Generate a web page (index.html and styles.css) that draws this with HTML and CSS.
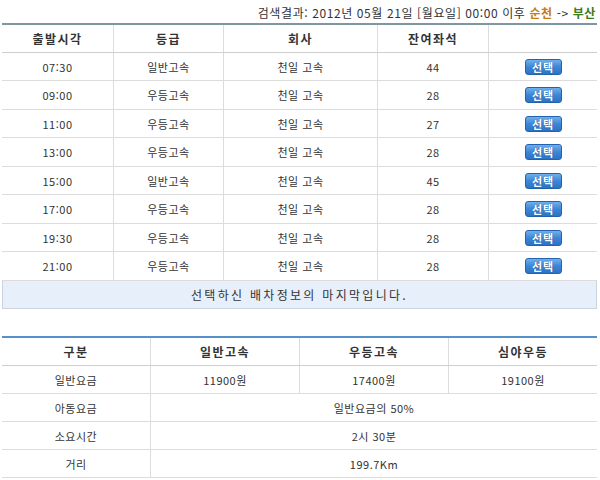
FILE: index.html
```html
<!DOCTYPE html>
<html lang="ko">
<head>
<meta charset="utf-8">
<link rel="stylesheet" href="styles.css">
</head>
<body>
<div class="page">
  <div class="title">검색결과: 2012년 05월 21일 [월요일] 00:00 이후 <span class="from">순천</span> -&gt; <span class="to">부산</span></div>

  <div class="sched">
    <div class="row head">
      <div class="c">출발시각</div><div class="c">등급</div><div class="c">회사</div><div class="c">잔여좌석</div><div class="c"></div>
    </div>
    <div class="row a"><div class="c">07:30</div><div class="c">일반고속</div><div class="c">천일 고속</div><div class="c">44</div><div class="c"><span class="btn">선택</span></div></div>
    <div class="row b"><div class="c">09:00</div><div class="c">우등고속</div><div class="c">천일 고속</div><div class="c">28</div><div class="c"><span class="btn">선택</span></div></div>
    <div class="row a"><div class="c">11:00</div><div class="c">우등고속</div><div class="c">천일 고속</div><div class="c">27</div><div class="c"><span class="btn">선택</span></div></div>
    <div class="row b"><div class="c">13:00</div><div class="c">우등고속</div><div class="c">천일 고속</div><div class="c">28</div><div class="c"><span class="btn">선택</span></div></div>
    <div class="row a"><div class="c">15:00</div><div class="c">일반고속</div><div class="c">천일 고속</div><div class="c">45</div><div class="c"><span class="btn">선택</span></div></div>
    <div class="row b"><div class="c">17:00</div><div class="c">우등고속</div><div class="c">천일 고속</div><div class="c">28</div><div class="c"><span class="btn">선택</span></div></div>
    <div class="row a"><div class="c">19:30</div><div class="c">우등고속</div><div class="c">천일 고속</div><div class="c">28</div><div class="c"><span class="btn">선택</span></div></div>
    <div class="row b"><div class="c">21:00</div><div class="c">우등고속</div><div class="c">천일 고속</div><div class="c">28</div><div class="c"><span class="btn">선택</span></div></div>
    <div class="info">선택하신 배차정보의 마지막입니다.</div>
  </div>

  <div class="fare">
    <div class="frow fhead"><div class="c">구분</div><div class="c">일반고속</div><div class="c">우등고속</div><div class="c">심야우등</div></div>
    <div class="frow"><div class="c">일반요금</div><div class="c">11900원</div><div class="c">17400원</div><div class="c">19100원</div></div>
    <div class="frow"><div class="c">아동요금</div><div class="c span">일반요금의 50%</div></div>
    <div class="frow"><div class="c">소요시간</div><div class="c span">2시 30분</div></div>
    <div class="frow"><div class="c">거리</div><div class="c span">199.7Km</div></div>
  </div>
</div>
</body>
</html>
```

FILE: styles.css
```css
html, body {
  margin: 0;
  padding: 0;
  background: #fff;
}
.page {
  width: 595px;
  margin-left: 2px;
  font-family: "Noto Sans CJK KR", "Noto Sans", sans-serif;
  font-size: 11px;
  color: #333;
}
.title {
  height: 23px;
  line-height: 26px;
  text-align: right;
  padding-right: 1px;
  font-size: 12px;
  letter-spacing: 0.6px;
  color: #333;
}
.title .from { color: #c57a18; font-weight: bold; }
.title .to { color: #3b7a1c; font-weight: bold; }

.sched {
  border-top: 2px solid #7d97a3;
}
.row {
  display: grid;
  grid-template-columns: 111px 110px 154px 111px 1fr;
  border-bottom: 1px solid #dcdcdc;
  height: 28px;
  box-sizing: border-box;
  letter-spacing: 0.5px;
}
.row.b { height: 29px; }
.row.head {
  height: 28px;
  font-weight: bold;
  font-size: 12px;
  letter-spacing: 1.5px;
  border-bottom-color: #cfcfcf;
}
.row .c {
  display: flex;
  align-items: center;
  justify-content: center;
  border-left: 1px solid #dcdcdc;
}
.row .c:first-child { border-left: none; }
.btn {
  display: inline-block;
  width: 37px;
  height: 16px;
  line-height: 15px;
  box-sizing: border-box;
  border: 1px solid #2462ad;
  border-radius: 3px;
  background: linear-gradient(#6fb0ee, #3d86d6 50%, #2c73c6);
  color: #fff;
  font-weight: bold;
  font-size: 11px;
  text-align: center;
  letter-spacing: 1px;
  text-shadow: 0 0 1px #1a4f90;
}
.info {
  height: 28px;
  box-sizing: border-box;
  background: #e7effb;
  border: 1px solid #c9d3e2;
  border-top: none;
  display: flex;
  align-items: center;
  justify-content: center;
  font-size: 12px;
  letter-spacing: 2.3px;
}

.fare {
  margin-top: 27px;
  border-top: 2px solid #5691cb;
}
.frow {
  display: grid;
  grid-template-columns: 148px 149px 149px 1fr;
  height: 28px;
  box-sizing: border-box;
  border-bottom: 1px solid #dcdcdc;
  letter-spacing: 0.5px;
}
.frow.fhead {
  font-weight: bold;
  font-size: 12px;
  letter-spacing: 1.5px;
  border-bottom-color: #cfcfcf;
}
.frow .c {
  display: flex;
  align-items: center;
  justify-content: center;
  border-left: 1px solid #dcdcdc;
}
.frow .c:first-child { border-left: none; }
.frow .c.span { grid-column: 2 / 5; }
```
